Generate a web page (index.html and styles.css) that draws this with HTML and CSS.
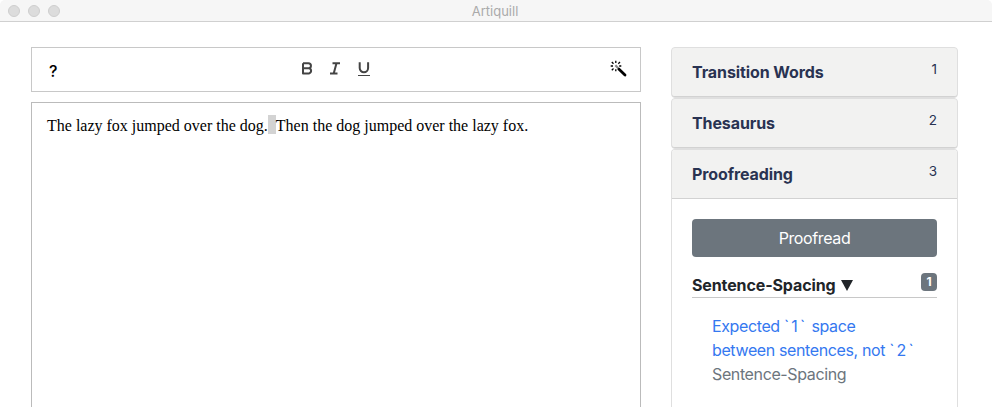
FILE: index.html
```html
<!DOCTYPE html>
<html lang="en">
<head>
<meta charset="utf-8">
<title>Artiquill</title>
<link rel="stylesheet" href="styles.css">
</head>
<body>
<header class="titlebar">
  <div class="lights"><i></i><i></i><i></i></div>
  <div class="title"><span>Artiquill</span></div>
</header>
<main class="workspace">
  <section class="writing">
    <div class="toolbar">
      <span class="help">?</span>
      <div class="formats">
        <svg width="12" height="13" viewBox="0 0 12 13"><path d="M2 1.2H7.4A2.45 2.45 0 0 1 7.4 6.3H2M7.4 6.3H8A2.6 2.6 0 0 1 8 11.4H2V1.2"/></svg>
        <svg width="12" height="13" viewBox="0 0 12 13"><path d="M3.5 1.2H11M1 11.4H8.5M7.5 1.2L4.7 11.4"/></svg>
        <svg width="14" height="15" viewBox="0 0 14 15"><path d="M2.7 .3V6A4.2 4.2 0 0 0 11.1 6V.3"/><path class="thin" d="M1 13.5H13"/></svg>
      </div>
      <svg class="wand" width="18" height="18" viewBox="0 0 18 18">
        <path class="handle" d="M8.8 9L15 15"/>
        <path class="tip" d="M5.4 5.3L8.3 8.2"/>
        <path class="rays" d="M5.8.8V3M5.8 9.2V11.3M.7 6H3M9.2 6H11.3M1.8 2L3.5 3.7M10 2L8.3 3.7M1.8 10.2L3.5 8.5"/>
      </svg>
    </div>
    <div class="editor"><span class="first">The lazy fox jumped over the dog.</span><mark></mark><span class="second">Then the dog jumped over the lazy fox.</span></div>
  </section>
  <aside class="panels">
    <div class="card"><div class="card-header"><h2>Transition Words</h2><span>1</span></div></div>
    <div class="card"><div class="card-header"><h2>Thesaurus</h2><span>2</span></div></div>
    <div class="card open">
      <div class="card-header"><h2>Proofreading</h2><span>3</span></div>
      <div class="card-body">
        <button>Proofread</button>
        <div class="group"><h3>Sentence-Spacing</h3><svg width="12" height="11" viewBox="0 0 12 11"><path d="M0 0H12L6 11Z"/></svg><span class="badge">1</span></div>
        <div class="issue"><a>Expected <span class="tick">`1`</span> space</a><a>between sentences, not <span class="tick">`2`</span></a><span class="rule">Sentence-Spacing</span></div>
      </div>
    </div>
  </aside>
</main>
</body>
</html>
```
FILE: styles.css
```css
* { box-sizing: border-box; }
body {
  margin: 0;
  height: 407px;
  overflow: hidden;
  background: #fff;
  color: #212529;
  font-family: Inter, "Liberation Sans", sans-serif;
  font-size: 16px;
  line-height: 24px;
}
h2, h3 { margin: 0; font-size: 16px; }
.titlebar {
  display: grid;
  grid-template-columns: 1fr auto 1fr;
  align-items: center;
  height: 22px;
  padding-left: 8px;
  background: #f6f6f6;
  border-bottom: 1px solid #d0d0d0;
  border-top-left-radius: 5px;
  border-top-right-radius: 5px;
}
.lights { display: flex; gap: 8px; }
.lights i {
  width: 12px;
  height: 12px;
  border: 1px solid #cecece;
  border-radius: 50%;
  background: #dcdcdc;
}
.title { padding: 1px 10px 0 0; color: #aaa; font-size: 13px; line-height: 21px; }
.workspace { display: flex; gap: 30px; height: 385px; padding: 25px 34px 0 31px; }
.writing { display: flex; flex-direction: column; gap: 10px; width: 610px; }
.toolbar {
  display: grid;
  grid-template-columns: 1fr auto 1fr;
  height: 45px;
  padding: 0 12px 0 17px;
  border: 1px solid #c8c8c8;
}
.help { color: #000; font-size: 16px; font-weight: 500; line-height: 46px; }
.formats { display: flex; gap: 16px; padding-top: 14px; margin: 0 2px 0 -4px; }
.formats svg { fill: none; stroke: #444; stroke-width: 2; stroke-linejoin: round; }
.formats .thin { stroke-width: 1; }
.wand { justify-self: end; margin-top: 12px; fill: none; stroke: #000; }
.handle { stroke-width: 2.8; stroke-linecap: round; }
.tip { stroke: #888; stroke-width: 2.2; }
.rays { stroke-width: 1.3; }
.editor {
  display: flex;
  flex: 1;
  align-items: flex-start;
  padding: 12px 15px;
  border: 1px solid #bbb;
  border-bottom: 0;
  color: #000;
  font-family: "Liberation Serif", serif;
  line-height: 22px;
  white-space: nowrap;
}
mark { width: 8px; height: 19px; background: #d3d3d3; }
.panels { flex: 1; display: flex; flex-direction: column; }
.card {
  border: 1px solid #dfdfdf;
  border-radius: 4px;
  height: 51px;
  background: #dfdfdf;
}
.card.open { flex: 1; border-bottom: 0; border-radius: 4px 4px 0 0; background: #fff; }
.card-header {
  display: flex;
  justify-content: space-between;
  height: 49px;
  padding: 12px 20px;
  border-bottom: 1px solid #d2d2d2;
  border-radius: 3px;
  background: #f2f2f1;
  color: #293352;
}
.open .card-header { border-radius: 3px 3px 0 0; }
.card-header h2 { font-weight: 650; letter-spacing: -.1px; }
.card-header span { font-size: 13.5px; line-height: 19px; }
.card-body { padding: 20px; }
button {
  display: block;
  width: 100%;
  height: 38px;
  padding: 0;
  border: 0;
  border-radius: 4px;
  background: #6c757d;
  color: #fff;
  font: inherit;
  letter-spacing: -.38px;
}
.group { display: flex; height: 41px; padding-top: 16px; border-bottom: 1px solid #c8c8c8; }
.group h3 { font-weight: 650; letter-spacing: -.12px; }
.group svg { margin: 7px 0 0 5px; fill: #212529; }
.badge {
  width: 16px;
  height: 18px;
  margin-left: auto;
  border-radius: 4px;
  background: #6c757d;
  color: #fff;
  font-size: 12px;
  font-weight: 700;
  line-height: 18px;
  text-align: center;
}
.issue { display: flex; flex-direction: column; padding: 16px 0 0 20px; color: #6c757d; white-space: nowrap; letter-spacing: -.38px; }
.issue a { color: #3478f0; }
.tick { letter-spacing: 2.2px; }
```
